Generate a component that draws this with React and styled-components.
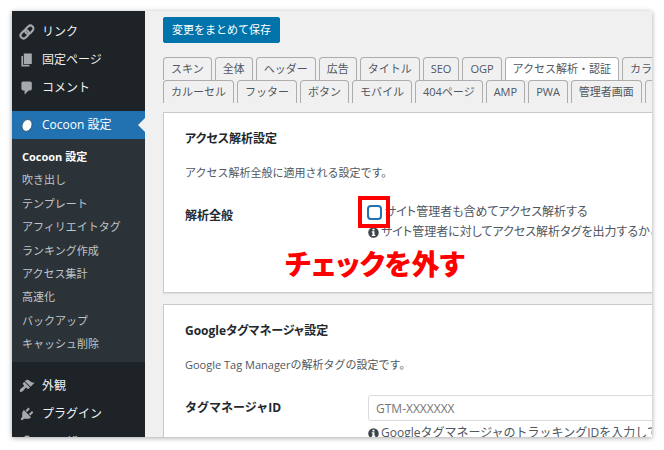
import React from "react";
import styled, { createGlobalStyle, css } from "styled-components";

const GlobalStyle = createGlobalStyle`
  * { box-sizing: border-box; }
  body {
    margin: 0;
    background: #fff;
    color: #50575e;
    font-family: "Open Sans", "Noto Sans CJK JP", sans-serif;
    font-size: 12px;
    line-height: 20px;
  }
  ul, h2, p { margin: 0; padding: 0; }
  ul { list-style: none; }
`;

const Page = styled.div`
  height: 100vh;
  padding: 11px 12px 13px;
`;

const Frame = styled.div`
  display: flex;
  height: 100%;
  overflow: hidden;
  background: #f0f0f1;
  box-shadow: 0 1px 5px rgba(0, 0, 0, 0.35);
`;

const Sidebar = styled.nav`
  flex: none;
  width: 133px;
  padding-top: 7px;
  background: #1d2327;
`;

const MenuLink = styled.a`
  position: relative;
  display: flex;
  align-items: center;
  gap: 7px;
  height: 28px;
  padding-left: 7px;
  color: #f0f0f1;
  text-decoration: none;
  white-space: nowrap;
  svg { flex: none; fill: #a7aaad; }
  ${(p) =>
    p.$current &&
    css`
      margin-top: 9px;
      background: #2271b1;
      color: #fff;
      &::after {
        content: "";
        position: absolute;
        right: 0;
        top: 7px;
        border: 7px solid transparent;
        border-left-width: 0;
        border-right-color: #f0f0f1;
      }
    `}
`;

const SubMenu = styled.ul`
  display: flex;
  flex-direction: column;
  justify-content: space-between;
  min-height: 223px;
  margin-bottom: 10px;
  padding: 8px 10px;
  background: #2c3338;
  font-size: 11px;
`;

const SubLink = styled.a`
  display: block;
  color: ${(p) => (p.$current ? "#fff" : "#c0c5c9")};
  font-weight: ${(p) => (p.$current ? 700 : 400)};
  text-decoration: none;
  white-space: nowrap;
`;

const Main = styled.main`
  flex: 1;
  min-width: 0;
  overflow: hidden;
  padding: 6px 0 0 18px;
`;

const Canvas = styled.div`
  width: calc(100% + 24px);
`;

const SaveButton = styled.button`
  display: block;
  height: 26px;
  margin-bottom: 14px;
  padding: 0 8px;
  border: 1px solid #0073aa;
  border-radius: 2px;
  background: #0073aa;
  color: #fff;
  font: inherit;
  font-size: 11px;
`;

const TabRow = styled.div`
  display: flex;
  gap: 3px;
`;

const Tab = styled.button`
  flex: none;
  height: 23px;
  padding: 0 7px;
  border: 1px solid #adadad;
  border-bottom: 0;
  border-radius: 4px 4px 0 0;
  background: ${(p) => (p.$selected ? "#fff" : "#f0f0f1")};
  color: #50575e;
  font: inherit;
  font-size: 11px;
  white-space: nowrap;
`;

const Tabs = styled.div`
  margin-bottom: 9px;
`;

const Card = styled.section`
  min-height: 181px;
  margin-bottom: 11px;
  padding: 16px 21px;
  border: 1px solid #c9cacc;
  background: #fff;
  box-shadow: 0 1px 1px rgba(0, 0, 0, 0.06);
`;

const CardTitle = styled.h2`
  color: #23282d;
  font-size: 12px;
  font-weight: 700;
  line-height: 20px;
  font-feature-settings: "palt";
`;

const Lead = styled.p`
  margin: 14px 0 19px;
  font-size: 11px;
`;

const Field = styled.div`
  display: grid;
  grid-template-columns: 183px 1fr;
  white-space: nowrap;
  font-feature-settings: ${(p) => (p.$proportional ? '"palt"' : "normal")};
`;

const FieldName = styled.label`
  padding-top: 4px;
  color: #23282d;
  font-weight: 700;
`;

const Option = styled.div`
  position: relative;
  display: flex;
  align-items: center;
  gap: 3px;
  height: 20px;
  margin-left: -1px;
`;

const Checkbox = styled.input`
  appearance: none;
  width: 15px;
  height: 15px;
  margin: 0;
  border: 2px solid #2271b1;
  border-radius: 4px;
  background: #fff;
`;

const Highlight = styled.span`
  position: absolute;
  left: -9px;
  top: -6px;
  width: 32px;
  height: 32px;
  border: 4px solid #f00;
`;

const Callout = styled.strong`
  position: absolute;
  left: -82px;
  top: 42px;
  color: #f00;
  font-size: 28px;
  font-weight: 900;
  line-height: 40px;
`;

const Help = styled.p`
  display: flex;
  align-items: center;
  gap: 2px;
  svg { flex: none; }
`;

const TextInput = styled.input`
  display: block;
  width: 100%;
  height: 26px;
  margin-top: 1px;
  margin-bottom: 2px;
  padding: 0 7px;
  border: 1px solid #dcdcde;
  border-radius: 3px;
  background: #fff;
  font: inherit;
  &::placeholder { color: #757575; opacity: 1; }
`;

const Icon = ({ children }) => (
  <svg width="16" height="16" viewBox="0 0 20 20" aria-hidden="true">{children}</svg>
);

const LinkIcon = () => (
  <Icon>
    <g transform="rotate(-45 10 10)" fill="none" stroke="#a7aaad" strokeWidth="2.6">
      <rect x="0.2" y="6.2" width="11.4" height="7.6" rx="3.8" />
      <rect x="8.4" y="6.2" width="11.4" height="7.6" rx="3.8" />
    </g>
  </Icon>
);
const PagesIcon = () => (
  <Icon><path d="M6 15V2h10v13H6zm-1 1h8v2H3V5h2v11z" /></Icon>
);
const CommentIcon = () => (
  <Icon><path d="M5 2h9q.82 0 1.41.59T16 4v7q0 .82-.59 1.41T14 13h-2l-5 5v-5H5q-.82 0-1.41-.59T3 11V4q0-.82.59-1.41T5 2z" /></Icon>
);
const CocoonIcon = () => (
  <Icon><ellipse cx="10" cy="10.5" rx="6" ry="7.6" transform="rotate(24 10 10.5)" fill="#fff" stroke="#34536e" strokeWidth="1" /></Icon>
);
const BrushIcon = () => (
  <Icon><path d="M14.48 11.06L7.41 3.99l1.5-1.5c.5-.56 2.3-.47 3.51.32 1.21.8 1.43 1.28 2.91 2.1 1.18.64 2.45 1.26 4.45.85zm-.71.71L6.7 4.7 4.93 6.47c-.39.39-.39 1.02 0 1.41l1.06 1.06c.39.39.39 1.03 0 1.42-.6.6-1.43 1.11-2.21 1.69-.35.26-.7.53-1.01.84C1.43 14.23.4 16.08 1.4 17.07c.99 1 2.84-.03 4.18-1.36.31-.31.58-.66.85-1.02.57-.78 1.08-1.61 1.69-2.21.39-.39 1.02-.39 1.41 0l1.06 1.06c.39.39 1.02.39 1.41 0z" /></Icon>
);
const PluginIcon = () => (
  <Icon><path d="M13.11 4.36L9.87 7.6 8 5.73l3.24-3.24c.35-.34 1.05-.2 1.56.32.52.51.66 1.21.31 1.55zm-8 1.77l.91-1.12 9.01 9.01-1.19.84c-.71.71-2.63 1.16-3.82 1.16H6.14L4.9 17.26c-.59.59-1.54.59-2.12 0-.59-.58-.59-1.53 0-2.12l1.24-1.24v-3.88c0-1.13.4-3.19 1.09-3.89zm7.26 3.97l3.24-3.24c.34-.35 1.04-.21 1.55.31.52.51.66 1.21.31 1.55l-3.24 3.25z" /></Icon>
);
const UserIcon = () => (
  <Icon><circle cx="10" cy="6" r="4" /><path d="M3 18c0-5 3-7 7-7s7 2 7 7z" /></Icon>
);
const InfoIcon = () => (
  <svg width="11" height="11" viewBox="0 0 22 22" aria-hidden="true">
    <circle cx="11" cy="11" r="10.5" fill="#3c434a" />
    <path d="M9 3.5h4v3.4H9zM7.5 8.6H13v7h1.6v2.6H7.5v-2.6H9v-4.4H7.5z" fill="#fff" />
  </svg>
);

const topMenu = [
  ["リンク", LinkIcon],
  ["固定ページ", PagesIcon],
  ["コメント", CommentIcon],
];
const subMenu = [
  "Cocoon 設定", "吹き出し", "テンプレート", "アフィリエイトタグ", "ランキング作成",
  "アクセス集計", "高速化", "バックアップ", "キャッシュ削除",
];
const bottomMenu = [
  ["外観", BrushIcon],
  ["プラグイン", PluginIcon],
  ["ユーザー", UserIcon],
];
const tabRows = [
  ["スキン", "全体", "ヘッダー", "広告", "タイトル", "SEO", "OGP", "アクセス解析・認証", "カラム"],
  ["カルーセル", "フッター", "ボタン", "モバイル", "404ページ", "AMP", "PWA", "管理者画面", "ウィジェット"],
];

const MenuItems = ({ items }) =>
  items.map(([label, Glyph]) => (
    <MenuLink key={label} href="#"><Glyph />{label}</MenuLink>
  ));

export default function App() {
  return (
    <Page>
      <GlobalStyle />
      <Frame>
        <Sidebar>
          <MenuItems items={topMenu} />
          <MenuLink href="#" $current><CocoonIcon />Cocoon 設定</MenuLink>
          <SubMenu>
            {subMenu.map((label, i) => (
              <li key={label}><SubLink href="#" $current={i === 0}>{label}</SubLink></li>
            ))}
          </SubMenu>
          <MenuItems items={bottomMenu} />
        </Sidebar>
        <Main>
          <Canvas>
            <SaveButton type="button">変更をまとめて保存</SaveButton>
            <Tabs role="tablist">
              {tabRows.map((row) => (
                <TabRow key={row[0]}>
                  {row.map((label) => {
                    const selected = label === "アクセス解析・認証";
                    return (
                      <Tab key={label} type="button" role="tab" aria-selected={selected} $selected={selected}>
                        {label}
                      </Tab>
                    );
                  })}
                </TabRow>
              ))}
            </Tabs>
            <Card>
              <CardTitle>アクセス解析設定</CardTitle>
              <Lead>アクセス解析全般に適用される設定です。</Lead>
              <Field $proportional>
                <FieldName as="span">解析全般</FieldName>
                <div>
                  <Option>
                    <Checkbox id="include-admin" type="checkbox" />
                    <label htmlFor="include-admin">サイト管理者も含めてアクセス解析する</label>
                    <Highlight />
                    <Callout>チェックを外す</Callout>
                  </Option>
                  <Help><InfoIcon />サイト管理者に対してアクセス解析タグを出力するかどうかを設定します。</Help>
                </div>
              </Field>
            </Card>
            <Card>
              <CardTitle>Googleタグマネージャ設定</CardTitle>
              <Lead>Google Tag Managerの解析タグの設定です。</Lead>
              <Field>
                <FieldName htmlFor="gtm-id">タグマネージャID</FieldName>
                <div>
                  <TextInput id="gtm-id" type="text" placeholder="GTM-XXXXXXX" />
                  <Help><InfoIcon />GoogleタグマネージャのトラッキングIDを入力してください。</Help>
                </div>
              </Field>
            </Card>
          </Canvas>
        </Main>
      </Frame>
    </Page>
  );
}
